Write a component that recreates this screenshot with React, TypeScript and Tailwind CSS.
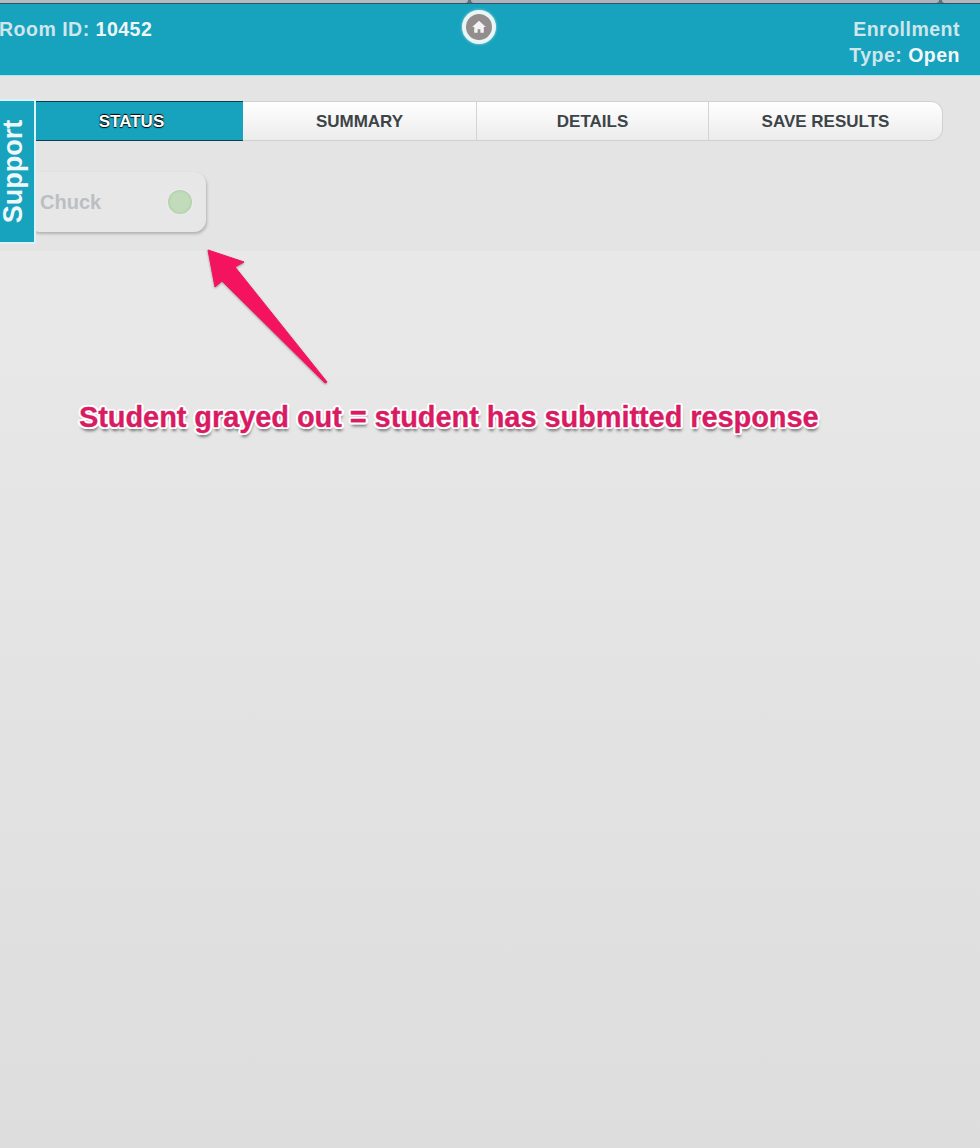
import React from 'react';

const sans = "font-['Liberation_Sans',Arial,sans-serif]";

const tabs = [
  { label: 'SUMMARY', width: 'w-[234px]' },
  { label: 'DETAILS', width: 'w-[232px]' },
  { label: 'SAVE RESULTS', width: 'w-[233px]' },
];

const App: React.FC = () => {
  return (
    <div className={`relative w-[980px] h-[1148px] overflow-hidden bg-gradient-to-b from-[#ececec] to-[#dddddd] ${sans}`}>
      {/* Top strip, bottom edge of the cards above */}
      <div className="h-[4px] flex gap-[3px] bg-[#5d7480] border-b border-[#2f5563]">
        <div className="w-[468px] bg-[#b3bac2] rounded-br-sm" />
        <div className="flex-1 bg-[#aeb2bd] rounded-b-sm" />
        <div className="w-[38px] bg-[#b3b6bd] rounded-bl-sm" />
      </div>

      {/* Header */}
      <header className="relative h-[72px] bg-[#17a2bd] border-b border-[#a5e6f0] flex justify-between pt-[12px] pr-5 text-[19.5px] leading-[26px] font-bold tracking-[0.5px] text-[#cfe6ec]">
        <div className="-ml-px">
          Room ID: <span className="text-[#eef6f8]">10452</span>
        </div>
        <div className="text-right">
          <div>Enrollment</div>
          <div>
            Type: <span className="text-[#f2f8fa]">Open</span>
          </div>
        </div>
        <div className="absolute left-[462px] top-[6px] w-[34px] h-[34px] rounded-full bg-[#938d8d] border-[4px] border-[#eaf5f6] flex items-center justify-center shadow-[0_0_3px_rgba(255,255,255,0.6)]">
          <svg width="16" height="16" viewBox="0 0 14 14" fill="#f4f4f4">
            <path d="M7 1.5 L13 7 L11.2 7 L11.2 12 L8.2 12 L8.2 9 L5.8 9 L5.8 12 L2.8 12 L2.8 7 L1 7 Z" />
          </svg>
        </div>
      </header>

      {/* Status area */}
      <section className="h-[175px] bg-[#e4e4e4] pt-[25px]">
        <nav className="ml-[36px] w-[907px] h-[40px] flex text-[17px] font-bold">
          <div className="w-[207px] pr-[16px] pt-px flex items-center justify-center bg-[#17a2bd] border-y border-[#0e3f4e] text-white [text-shadow:0_1px_1px_#000,0_-1px_1px_#000]">
            STATUS
          </div>
          <div className="flex-1 flex rounded-r-xl border border-l-0 border-[#d0d0d0] bg-gradient-to-b from-white to-[#ececec] overflow-hidden">
            {tabs.map((tab) => (
              <div
                key={tab.label}
                className={`${tab.width} pt-px flex items-center justify-center border-r last:border-r-0 border-[#d4d4d4] text-[#3d4448]`}
              >
                {tab.label}
              </div>
            ))}
          </div>
        </nav>

        <div className="mt-[31px] ml-[28px] w-[178px] h-[60px] pl-[12px] pr-[14px] flex items-center justify-between rounded-xl bg-[#e7e7e7] shadow-[1px_2px_3px_rgba(0,0,0,0.22)] text-[20px] font-bold text-[#bcbfc2]">
          <span>Chuck</span>
          <span className="w-[24px] h-[24px] rounded-full bg-[#c2dcbb] shadow-[inset_0_0_3px_rgba(110,150,110,0.4),0_0_2px_rgba(255,255,255,0.8)]" />
        </div>
      </section>

      {/* Support tab */}
      <div className="absolute left-0 top-[99px] w-[36px] h-[145px] pr-[6px] bg-[#17a2bd] border-2 border-l-0 border-[#d9f3f7] flex items-center justify-center">
        <span className="-rotate-90 whitespace-nowrap text-[27px] leading-none font-bold text-[#eef8fa]">Support</span>
      </div>

      {/* Annotation arrow */}
      <svg className="absolute left-[200px] top-[245px]" width="135" height="145" viewBox="0 0 135 145">
        <path
          d="M8 5 L44 17 L35 22 L127 137 L125 138 L22 36 L15 42 Z"
          fill="#f3135f"
          stroke="#f3135f"
          strokeWidth="1"
          strokeLinejoin="round"
          style={{ filter: 'drop-shadow(0 1px 1px rgba(0,0,0,0.35))' }}
        />
      </svg>

      {/* Annotation text */}
      <div className="absolute left-[79px] top-[399px] whitespace-nowrap text-[29px] leading-[36px] font-bold tracking-[-0.08px] text-[#d81b62] [-webkit-text-stroke:0.3px_#d81b62] [text-shadow:-2px_0_0_#fff,2px_0_0_#fff,0_-2px_0_#fff,0_2px_0_#fff,-2px_-1px_0_#fff,2px_-1px_0_#fff,-2px_1px_0_#fff,2px_1px_0_#fff,-1px_-2px_0_#fff,1px_-2px_0_#fff,-1px_2px_0_#fff,1px_2px_0_#fff,1px_4px_3px_rgba(0,0,0,0.5)]">
        Student grayed out = student has submitted response
      </div>
    </div>
  );
};

export default App;
